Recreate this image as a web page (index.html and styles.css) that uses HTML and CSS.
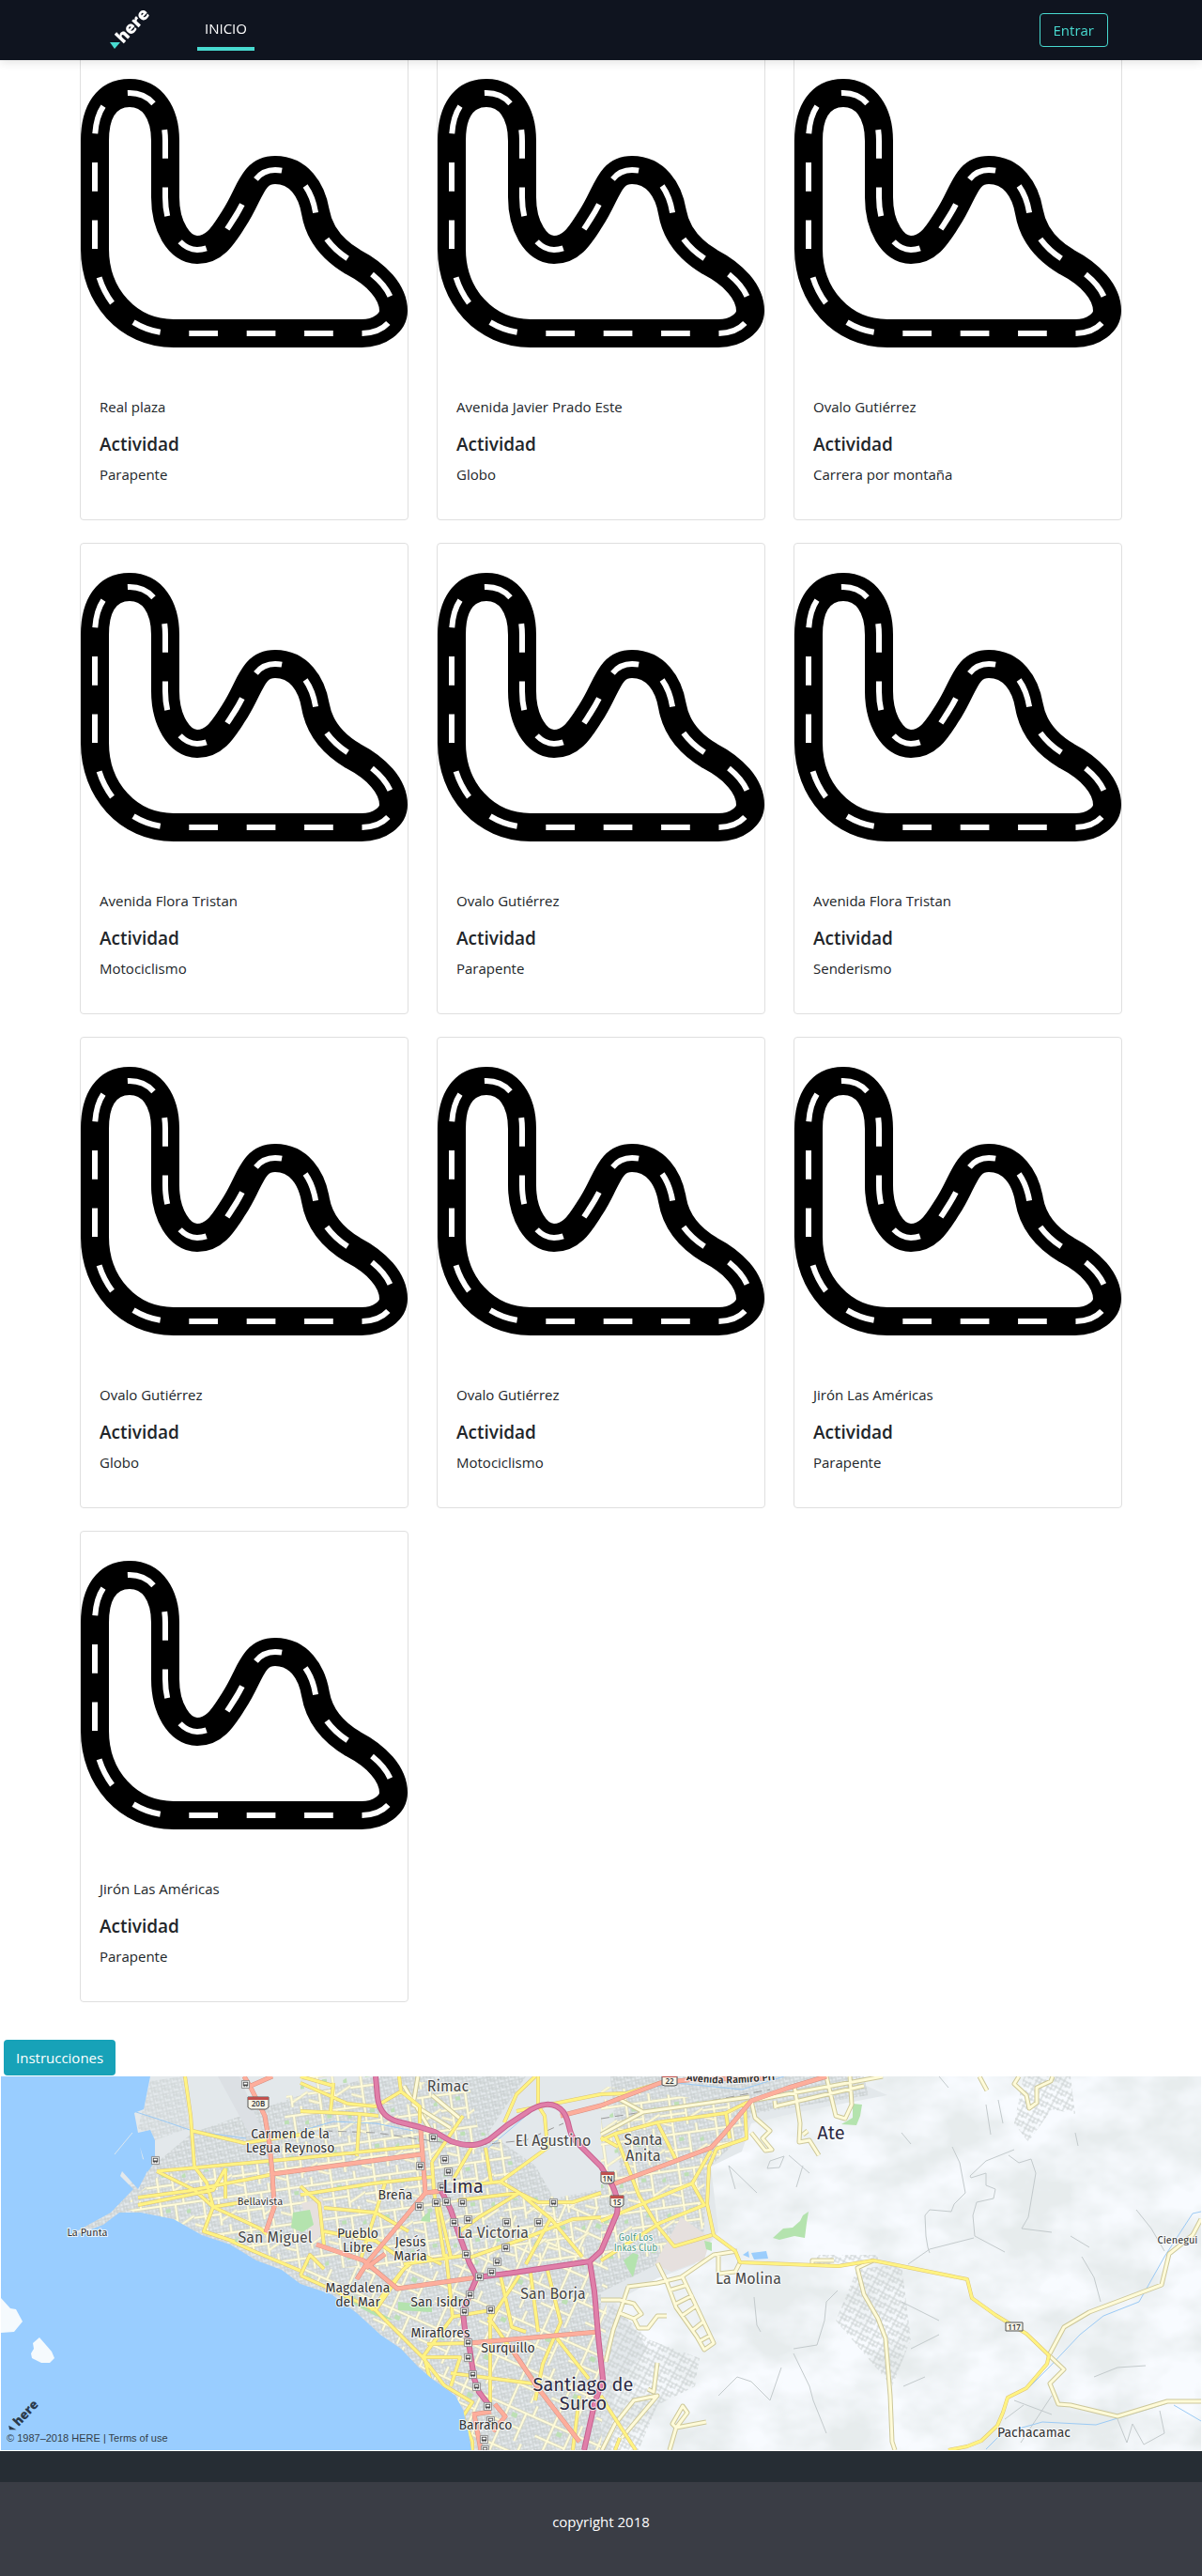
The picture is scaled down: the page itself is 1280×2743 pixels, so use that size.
FILE: index.html
```html
<!DOCTYPE html>
<html lang="es">
<head>
<meta charset="utf-8">
<meta name="viewport" content="width=device-width, initial-scale=1">
<title>Here - Inicio</title>
<link rel="stylesheet" href="styles.css">
</head>
<body>
<svg class="defs" aria-hidden="true">
  <symbol id="track" viewBox="0 0 348 348">
    <path fill="none" stroke="#000" stroke-width="30" d="M15 120V97C15 65 28 46 52 46C76 46 90 67 90 97V157C90 188 105 213 124 213C144 213 153 195 163 180C181 153 182 128 207 128C232 128 246 149 250 173C254 196 268 213 290 226C315 239 333 258 333 278C333 290 319 302 299 302H99C50 302 15 262 15 212Z"/>
    <path fill="none" stroke="#fff" stroke-width="6" pathLength="18" stroke-dasharray=".5 .5" stroke-dashoffset=".5" d="M15 120V97C15 65 28 46 52 46C76 46 90 67 90 97V157C90 188 105 213 124 213C144 213 153 195 163 180C181 153 182 128 207 128C232 128 246 149 250 173C254 196 268 213 290 226C315 239 333 258 333 278C333 290 319 302 299 302H99C50 302 15 262 15 212Z"/>
  </symbol>
</svg>

<header class="topbar">
  <div class="topbar-inner">
    <a class="brand" href="#" aria-label="here">
      <svg class="logo" width="42" height="40" viewBox="0 0 42 40">
        <path d="M0 33H11L5 40Z" fill="#48dad0"/>
        <text class="logo-text" transform="translate(14 35) rotate(-47)" fill="#fff">here</text>
      </svg>
    </a>
    <nav><a class="nav-link" href="#">INICIO</a></nav>
    <button class="btn btn-outline" type="button">Entrar</button>
  </div>
</header>

<main>
  <section class="cards">
    <article class="card"><svg class="card-img"><use href="#track"/></svg><div class="card-body"><p>Real plaza</p><h5>Actividad</h5><p>Parapente</p></div></article>
    <article class="card"><svg class="card-img"><use href="#track"/></svg><div class="card-body"><p>Avenida Javier Prado Este</p><h5>Actividad</h5><p>Globo</p></div></article>
    <article class="card"><svg class="card-img"><use href="#track"/></svg><div class="card-body"><p>Ovalo Gutiérrez</p><h5>Actividad</h5><p>Carrera por montaña</p></div></article>
    <article class="card"><svg class="card-img"><use href="#track"/></svg><div class="card-body"><p>Avenida Flora Tristan</p><h5>Actividad</h5><p>Motociclismo</p></div></article>
    <article class="card"><svg class="card-img"><use href="#track"/></svg><div class="card-body"><p>Ovalo Gutiérrez</p><h5>Actividad</h5><p>Parapente</p></div></article>
    <article class="card"><svg class="card-img"><use href="#track"/></svg><div class="card-body"><p>Avenida Flora Tristan</p><h5>Actividad</h5><p>Senderismo</p></div></article>
    <article class="card"><svg class="card-img"><use href="#track"/></svg><div class="card-body"><p>Ovalo Gutiérrez</p><h5>Actividad</h5><p>Globo</p></div></article>
    <article class="card"><svg class="card-img"><use href="#track"/></svg><div class="card-body"><p>Ovalo Gutiérrez</p><h5>Actividad</h5><p>Motociclismo</p></div></article>
    <article class="card"><svg class="card-img"><use href="#track"/></svg><div class="card-body"><p>Jirón Las Américas</p><h5>Actividad</h5><p>Parapente</p></div></article>
    <article class="card"><svg class="card-img"><use href="#track"/></svg><div class="card-body"><p>Jirón Las Américas</p><h5>Actividad</h5><p>Parapente</p></div></article>
  </section>

  <button class="btn btn-info" type="button">Instrucciones</button>

  <section class="map" aria-label="Mapa de Lima">
    <svg class="map-canvas" viewBox="1 0 1278 398" preserveAspectRatio="xMidYMid slice">
      <defs>
        <filter id="relief" x="0" y="0" width="100%" height="100%">
          <feTurbulence type="fractalNoise" baseFrequency=".014 .02" numOctaves="4" seed="11"/>
          <feColorMatrix values="0 0 0 0 .80  0 0 0 0 .84  0 0 0 0 .85  2.6 0 0 0 -.8"/>
        </filter>
        <pattern id="blocks" width="11" height="9" patternUnits="userSpaceOnUse" patternTransform="rotate(-12)">
          <path d="M0 1H11M0 4H7M3 6H11M1 0V9M4 0V6M8 2V9" stroke="#c5cbcb" fill="none"/>
        </pattern>
        <pattern id="blocks2" width="13" height="10" patternUnits="userSpaceOnUse" patternTransform="rotate(28)">
          <path d="M0 2H13M0 6H9M2 0V10M6 2V8M10 0V7" stroke="#cad0d0" fill="none"/>
        </pattern>
        <pattern id="streets" width="46" height="38" patternUnits="userSpaceOnUse" patternTransform="rotate(-8)">
          <g fill="none" stroke="#d8d5b4" stroke-width="3"><path id="st" d="M0 9H46M0 26H28M12 0V38M28 9V38M37 0V9M28 33L46 24M0 33L12 38"/></g>
          <use href="#st" fill="none" stroke="#fffbd8" stroke-width="2"/>
          <path d="M17 13h5v4h-5zM39 17l4-2v5h-4z" fill="#bde0b5"/>
        </pattern>
        <pattern id="streets2" width="52" height="44" patternUnits="userSpaceOnUse" patternTransform="rotate(24)">
          <g fill="none" stroke="#d8d5b4" stroke-width="3"><path id="st2" d="M0 12H52M0 30H34M14 0V44M34 12V44M42 0V12"/></g>
          <use href="#st2" fill="none" stroke="#fffbd8" stroke-width="2"/>
          <path d="M20 16h6v5h-6z" fill="#bde0b5"/>
        </pattern>
        <symbol id="bus" viewBox="0 0 10 10" overflow="visible">
          <path d="M.5.5h9v9h-9z" fill="#f6f7f7" stroke="#8a8a8a"/>
          <path d="M2 2h6v5H2zM3 7h1v1H3zM6 7h1v1H6z" fill="#4a4a4a"/>
          <path d="M3 3h4v2H3z" fill="#fff"/>
        </symbol>
      </defs>

      <path d="M0 0H1280V398H0Z" fill="#f8fbff"/>
      <path d="M500 0H1280V398H500Z" filter="url(#relief)"/>

      <!-- urban area -->
      <g id="city">
        <path fill="#e3e8eb" d="M160 0H900L945 20L850 38L800 50L790 80L757 96L765 165L740 200L700 215L655 240L690 290L655 330L650 398H60V0Z"/>
        <path fill="url(#blocks)" d="M205 60L320 20L400 0H560L520 60L570 95L590 130L640 120L660 100L650 0H700L810 0L920 0L925 20L800 40L790 64L752 100L750 165L700 200L640 230V398H500L60 172L145 110Z"/>
        <path fill="url(#blocks2)" d="M650 240L690 280L745 300L740 330L700 350L680 398H640L640 260ZM913 205L960 200L970 280L950 330L890 260ZM1090 0L1140 0L1145 40L1120 35L1095 70L1080 50ZM870 190H935V200H870Z"/>
        <path fill="url(#streets)" d="M305 20L440 30L540 70L550 110L500 200L320 205L215 165L130 140L170 105L300 90Z"/>
        <path fill="url(#streets2)" d="M315 205L500 200L560 130L650 140L640 398H508L470 330L380 245Z"/>
        <path fill="url(#streets)" d="M640 10L790 30L790 62L750 100V160L720 190L640 195ZM545 130L640 125L620 195L500 200ZM435 5L500 10L510 60L460 55ZM320 0H400L405 40L320 30Z"/>
        <path fill="url(#blocks)" opacity=".7" d="M160 5L195 0L202 55L165 68L147 55Z"/>
        <path fill="#dce0e4" d="M232 0H255L280 60L268 66Z"/>
        <path fill="#e6e0de" d="M725 150L757 172L750 195L715 208L697 200ZM321 135L343 130L345 165L332 178L325 150Z"/>
        <path fill="#b4e3ae" d="M312 145L330 142L334 158L322 166L310 161ZM424 240L460 244L460 251L424 249ZM823 172L834 162L844 161L852 154L855 148L861 144L859 156L857 172L846 170L830 174ZM896 51L908 44L908 29L918 30L916 42L912 52ZM450 150L458 143L458 155L448 154ZM664 196L674 188L680 190L674 214L668 204ZM355 225L380 238L420 260L400 255L368 238ZM750 175L758 177L758 186L752 184Z"/>
        <path fill="#9bcdfc" d="M800 188L816 186L818 194L803 195ZM791 190L797 186L798 193Z"/>
      </g>

      <!-- hill tracks -->
      <g fill="none" stroke="#c3cacc">
        <path d="M1014 75L1022 92L1028 124L1016 136L1013 144L990 142L985 148L986 170L988 182L990 188M1080 78L1050 90L1033 106L1034 108L1050 103L1050 116L1060 120L1058 130L1040 134L1036 148L1038 170L1070 187M1074 84L1085 92L1098 88L1103 103L1095 150L1088 162L1120 166M1210 142L1226 162L1240 186M967 200L990 184L1037 172M1152 192L1165 214L1172 240M783 120L776 95L806 124M817 98L820 90L835 85L830 97L817 98M840 84L862 103M803 235L806 265L810 272M845 290L870 286L878 260L880 240L892 228M845 295L862 330L866 345L880 380M765 340L785 320L800 325L820 345L832 310M855 95L848 118M1087 390L1120 340M1070 365L1090 350M1080 345L1120 360M1165 320L1190 310L1220 308"/>
        <path d="M1160 182L1140 170M960 60L970 72M1000 0L1010 12M1050 30L1055 62M1063 25L1068 50M1145 60L1148 74M1190 365L1200 390L1206 370L1218 392L1240 380L1235 356M970 290L1000 275M962 330L985 320M960 240L1000 260"/>
      </g>

      <!-- rivers -->
      <g fill="none" stroke="#9bcaf5" stroke-width="1">
        <path d="M145 38L170 46L205 58L262 66M320 58L355 48L400 50L440 58M640 21L720 7L790 14L835 0M1279 144L1270 146L1240 192L1213 240L1175 255L1150 275L1117 310L1095 332M1050 397L1067 380L1110 368L1167 371L1243 348M1250 350L1279 367M520 76L545 55L560 42"/>
      </g>
      <path d="M345 58L400 60L440 66L500 74L560 68L600 50M640 45L735 30L820 14" fill="none" stroke="#999" stroke-dasharray="9 6"/>

      <!-- local roads -->
      <g fill="none" stroke-linejoin="round">
        <g stroke="#ccc79a" stroke-width="5">
          <path id="local" d="M1279 152L1270 169L1245 189L1237 222L1160 251L1133 267L1117 297L1133 312L1118 327L1127 349L1140 350L1190 362L1243 346L1279 346M1043 0L1051 15M1085 0L1080 8L1093 20L1096 34L1104 28L1104 12L1119 5L1121 0M930 196L913 204L920 232L935 258L943 279L948 340L950 389L953 398M700 199L710 219L720 246L742 277L750 291L760 284L727 214M712 228L732 222M720 242L738 233M726 255L742 244M738 270L748 262M745 282L756 276M825 32L920 10M800 26L940 0M825 26L826 34M846 10L852 50L851 70L862 68L872 84M880 0L890 42L900 45L907 30L905 0M855 62L860 58M657 23L685 38L640 62M685 38L798 22M800 26L804 44L820 58L812 66L822 78L815 79L800 60M668 224L700 220L725 214L760 190L785 186M669 224L662 245L653 270L645 304M640 238L660 238L675 242L683 253L675 258L660 252M675 258L680 268L690 268L700 255L710 255M641 398L655 370L675 345L700 340L662 385M690 333L696 336L700 305M713 398L720 374L716 370L727 351L732 358L720 374L752 368M788 198L783 208L765 210V188M888 196L865 196V200M430 10L460 60M445 0L440 30L480 55M460 20L490 45"/>
        </g>
        <use href="#local" stroke="#fffbd9" stroke-width="3"/>

        <!-- main avenues -->
        <g stroke="#dcc373" stroke-width="4">
          <path id="avenue" d="M197 0L203 42L207 96L220 113L227 139M167 101L320 87L447 74M167 101L207 121L227 139L277 162L284 168M147 129L200 122L287 105M147 137L227 121L240 98M227 139L217 165L250 176M205 58L260 71L320 62M227 139L270 132M240 98V130M320 37L383 40L403 42M320 7L370 29L400 32L427 16L425 0M427 16L447 32L447 50M320 126L397 114L460 107M320 117L340 135L345 180M355 7L352 38M383 40L380 85M320 0L355 10M487 117L533 112L553 124L573 134L610 134L640 124M487 132L553 124M460 91L493 42M517 76L523 112M553 124L587 152L620 192M502 76L483 109M460 91L462 122L473 192M533 112L583 76L580 42L573 31M537 49L550 19L570 0M573 31V0M550 37L640 19L667 18L703 7M467 135L480 192M410 114L395 160L384 195M345 165L400 175L430 196M345 140L400 145L435 165M470 200L450 190L430 205L400 249M553 124L510 150L490 165M640 150L610 152L560 172L500 193M587 150L560 200M640 68L655 61L700 49L773 39L797 27M640 65L658 75M655 61L680 126L700 159L718 181L758 169M700 49L720 89M793 30L795 66L763 77L755 96L753 136L760 169L783 186L788 198L893 202L930 196L960 202L1030 216L1035 236L1060 254L1093 274L1117 297L1115 306L1093 332L1073 342L1068 358L1062 372L1045 388L1030 394L1010 398M773 39L777 66M757 79L737 114L693 132L640 154M640 196L703 156L750 137L737 114M320 212L360 230L400 249L450 299L473 329L503 347L493 362L503 389L503 398M245 175L270 186L320 207M475 189L482 256L450 299M522 249V352M533 212L545 267L560 272M553 212L520 262M565 209L573 272M583 206L597 262L578 306L570 345M593 279L627 322M450 299H490L480 330M480 316L567 327M520 256L550 299M455 285L500 284M482 256L522 249M640 340L647 352L677 398M655 398L660 385M430 200L500 190M395 249L430 205M617 340L610 398M460 330L452 300M345 205L330 190L320 212"/>
        </g>
        <use href="#avenue" stroke="#fff382" stroke-width="3"/>

        <g stroke="#d98e80" stroke-width="5">
          <path id="primary" d="M260 0L267 12L282 42L287 72L290 104L292 139L283 166M290 104L448 83M448 57L453 124L470 122M453 124L392 197L380 216M337 179L387 196L423 226L508 214M500 284L637 272M542 286L573 332L617 389M503 360L523 357M505 360L512 398M527 349L538 362L525 378M597 42L640 31L703 7L740 3L813 2M650 116L757 76L770 62L800 26L840 12L880 0M267 10L290 0M390 204L410 189"/>
        </g>
        <use href="#primary" stroke="#fdae9c" stroke-width="4"/>

        <g stroke="#c7608f" stroke-width="6">
          <path id="motorway" d="M400 0L402 22C404 40 414 45 423 48L447 54L463 59L480 69C500 76 510 73 520 68L540 52L560 39C575 28 590 26 600 38C608 50 604 58 612 68L640 96L652 116C658 128 658 140 657 146L640 186L628 197M470 122L480 142L488 166L500 199L508 214L500 232L493 252L495 269L500 289L505 322L510 336L520 349M508 214L547 209L628 197L633 229L637 276L642 322L633 349L622 398"/>
        </g>
        <use href="#motorway" stroke="#e07fa9" stroke-width="4"/>
      </g>

      <!-- ocean and islands -->
      <path fill="#99cdff" d="M0 0H160L157 15L153 35L143 39L147 60L160 57L165 68L165 91L157 102L154 91L149 75L152 88L160 92L155 105L147 120L130 101L128 106L142 120L118 145L85 163L72 172L110 158L127 145L150 145L185 152L215 169L245 179L273 196L300 206L320 221L353 232L380 252L405 275L427 290L445 309L460 322L485 340L493 355L498 375L502 398H0Z"/>
      <path fill="#f5fafd" d="M0 235L11 247L17 248L24 261L15 272L0 273ZM42 278L35 284L36 290L33 295L34 300L44 305H53L58 300L55 293Z"/>
      <path d="M122 83L141 60" stroke="#dce7ef"/>

      <g>
        <use href="#bus" x="161" y="85" width="9" height="9"/>
        <use href="#bus" x="257" y="4" width="9" height="9"/>
        <use href="#bus" x="457" y="61" width="9" height="9"/>
        <use href="#bus" x="469" y="84" width="9" height="9"/>
        <use href="#bus" x="473" y="97" width="9" height="9"/>
        <use href="#bus" x="443" y="91" width="9" height="9"/>
        <use href="#bus" x="442" y="134" width="9" height="9"/>
        <use href="#bus" x="460" y="130" width="9" height="9"/>
        <use href="#bus" x="471" y="129" width="9" height="9"/>
        <use href="#bus" x="488" y="130" width="9" height="9"/>
        <use href="#bus" x="466" y="113" width="9" height="9"/>
        <use href="#bus" x="479" y="151" width="9" height="9"/>
        <use href="#bus" x="494" y="148" width="9" height="9"/>
        <use href="#bus" x="535" y="151" width="9" height="9"/>
        <use href="#bus" x="569" y="151" width="9" height="9"/>
        <use href="#bus" x="585" y="130" width="9" height="9"/>
        <use href="#bus" x="534" y="178" width="9" height="9"/>
        <use href="#bus" x="492" y="185" width="9" height="9"/>
        <use href="#bus" x="525" y="193" width="9" height="9"/>
        <use href="#bus" x="519" y="204" width="9" height="9"/>
        <use href="#bus" x="506" y="209" width="9" height="9"/>
        <use href="#bus" x="496" y="228" width="9" height="9"/>
        <use href="#bus" x="490" y="246" width="9" height="9"/>
        <use href="#bus" x="518" y="244" width="9" height="9"/>
        <use href="#bus" x="494" y="279" width="9" height="9"/>
        <use href="#bus" x="494" y="295" width="9" height="9"/>
        <use href="#bus" x="499" y="313" width="9" height="9"/>
        <use href="#bus" x="503" y="326" width="9" height="9"/>
        <use href="#bus" x="515" y="347" width="9" height="9"/>
        <use href="#bus" x="518" y="362" width="9" height="9"/>
        <use href="#bus" x="511" y="382" width="9" height="9"/>
        <use href="#bus" x="512" y="393" width="9" height="9"/>
      </g>

      <g class="shield">
        <path d="M264 22h22v11l-3 2h-16l-3-2zM705 0h16v9l-3 1h-10l-3-1zM640 102h14v10l-3 2h-8l-3-2zM650 127h14v10l-3 2h-8l-3-2zM1071 262h18v9h-18z"/>
        <path class="shield-top" d="M264 22h22v3h-22zM705 0h16v1h-16zM640 102h14v3h-14zM650 127h14v3h-14z"/>
        <text x="275" y="32">20B</text><text x="713" y="8">22</text><text x="647" y="112">1N</text><text x="657" y="137">1S</text><text x="1080" y="270">117</text>
      </g>

      <g class="places">
        <path id="ramiro" d="M731 4Q775 12 850 0" fill="none"/>
        <text class="street"><textPath href="#ramiro">Avenida Ramiro Pri</textPath></text>
        <text class="district" x="477" y="16">Rimac</text>
        <text class="town" x="309" y="66">Carmen de la</text>
        <text class="town" x="309" y="81">Legua Reynoso</text>
        <text class="district" x="589" y="74">El Agustino</text>
        <text class="district" x="685" y="73">Santa</text>
        <text class="district" x="685" y="90">Anita</text>
        <text class="city" x="885" y="67">Ate</text>
        <text class="city" x="493" y="124">Lima</text>
        <text class="town" x="421" y="131">Breña</text>
        <text class="small" x="277" y="137">Bellavista</text>
        <text class="small" x="93" y="170">La Punta</text>
        <text class="district" x="293" y="177">San Miguel</text>
        <text class="town" x="381" y="172">Pueblo</text>
        <text class="town" x="381" y="187">Libre</text>
        <text class="town" x="437" y="181">Jesús</text>
        <text class="town" x="437" y="196">María</text>
        <text class="district" x="525" y="172">La Victoria</text>
        <text class="park" x="677" y="175">Golf Los</text>
        <text class="park" x="677" y="186">Inkas Club</text>
        <text class="town" x="381" y="230">Magdalena</text>
        <text class="town" x="381" y="245">del Mar</text>
        <text class="town" x="469" y="245">San Isidro</text>
        <text class="town" x="469" y="278">Miraflores</text>
        <text class="town" x="541" y="294">Surquillo</text>
        <text class="district" x="589" y="237">San Borja</text>
        <text class="city" x="621" y="335">Santiago de</text>
        <text class="city" x="621" y="355">Surco</text>
        <text class="town" x="517" y="376">Barranco</text>
        <text class="district" x="797" y="221">La Molina</text>
        <text class="town" x="1101" y="384">Pachacamac</text>
        <text class="small" x="1254" y="178">Cienegui</text>
      </g>
    </svg>
    <div class="map-credit">
      <svg class="logo" width="32" height="30" viewBox="0 0 42 40" aria-hidden="true">
        <path d="M0 33L11 39H1Z" fill="#2b3a4c"/>
        <text class="logo-text" transform="translate(14 35) rotate(-47)" fill="#2b3a4c">here</text>
      </svg>
      <p>© 1987–2018 HERE | <a href="#">Terms of use</a></p>
    </div>
  </section>
</main>

<footer class="footer">
  <p>copyright 2018</p>
</footer>
</body>
</html>
```

FILE: styles.css
```css
* { box-sizing: border-box; }

body {
  margin: 0;
  background: #fff;
  color: #212529;
  font: 15px/24px "Segoe UI", "Open Sans", "Noto Sans", sans-serif;
}

p, h5 { margin: 0; }

.defs { position: absolute; width: 0; height: 0; }

/* top bar */
.topbar {
  position: fixed;
  top: 0;
  left: 0;
  right: 0;
  z-index: 10;
  background: #0f141f;
  box-shadow: 0 2px 10px rgba(0, 0, 0, .12);
}
.topbar-inner {
  display: flex;
  align-items: center;
  max-width: 1110px;
  height: 64px;
  margin: 0 auto;
  padding: 0 15px 0 32px;
}
.brand { display: flex; margin-right: 51px; }
.logo { overflow: visible; }
.logo-text { font: 800 18px "Open Sans", sans-serif; }
.nav-link {
  display: block;
  padding: 10px 8px;
  border-bottom: 4px solid #48dad0;
  color: #fff;
  line-height: 20px;
  text-decoration: none;
}

.btn {
  border: 1px solid transparent;
  border-radius: 4px;
  font: inherit;
  cursor: pointer;
}
.btn-outline {
  height: 36px;
  margin-left: auto;
  padding: 0 14px;
  border-color: #48dad0;
  background: transparent;
  color: #48dad0;
}
.btn-info {
  display: block;
  height: 38px;
  margin: 40px 0 0 4px;
  padding: 0 12px;
  background: #17a2b8;
  color: #fff;
}

/* route cards */
.cards {
  display: grid;
  grid-template-columns: repeat(3, 1fr);
  gap: 24px 30px;
  max-width: 1140px;
  margin: 0 auto;
  padding: 52px 15px 0;
}
.card {
  border: 1px solid #dfdfdf;
  border-radius: 4px;
}
.card-img {
  display: block;
  width: 100%;
  aspect-ratio: 1;
}
.card-body { padding: 20px; }
.card-body p { margin-bottom: 16px; }
.card-body h5 {
  margin-bottom: 8px;
  font-size: 19px;
  font-weight: 600;
  line-height: 24px;
}

/* map */
.map {
  position: relative;
  height: 400px;
  border: 1px solid #fff;
  overflow: hidden;
}
.map-canvas { display: block; width: 100%; height: 100%; }
.places text {
  font-family: "Fira Sans", "Open Sans", "Noto Sans", sans-serif;
  text-anchor: middle;
  paint-order: stroke;
  stroke: rgba(255, 255, 255, .8);
  stroke-width: 2px;
  fill: #333;
}
.places .city { font-size: 20px; fill: #2d2b45; }
.places .district { font-size: 16px; fill: #484848; }
.places .town { font-size: 14px; }
.places .small { font-size: 11px; }
.places .park { font-size: 10px; fill: #4d9a88; }
.places .street { font-size: 11px; font-weight: 600; text-anchor: start; }
.shield path { fill: #f7f5e8; stroke: #555; }
.shield .shield-top { fill: #c0504d; stroke: none; }
.shield text {
  font: 600 8px "Open Sans", sans-serif;
  text-anchor: middle;
  fill: #333;
}
.map-credit {
  position: absolute;
  left: 6px;
  bottom: 5px;
  color: #333d48;
  font: 11px/16px "Liberation Sans", Arial, sans-serif;
}
.map-credit svg { display: block; margin-left: 2px; }
.map-credit a { color: inherit; text-decoration: none; }

/* footer */
.footer {
  border-top: 33px solid #262d34;
  padding: 30px 0 46px;
  background: #3a3d45;
  color: #fff;
  text-align: center;
}

@media (max-width: 800px) {
  .cards { grid-template-columns: repeat(2, 1fr); }
}
@media (max-width: 520px) {
  .cards { grid-template-columns: 1fr; }
}
```
